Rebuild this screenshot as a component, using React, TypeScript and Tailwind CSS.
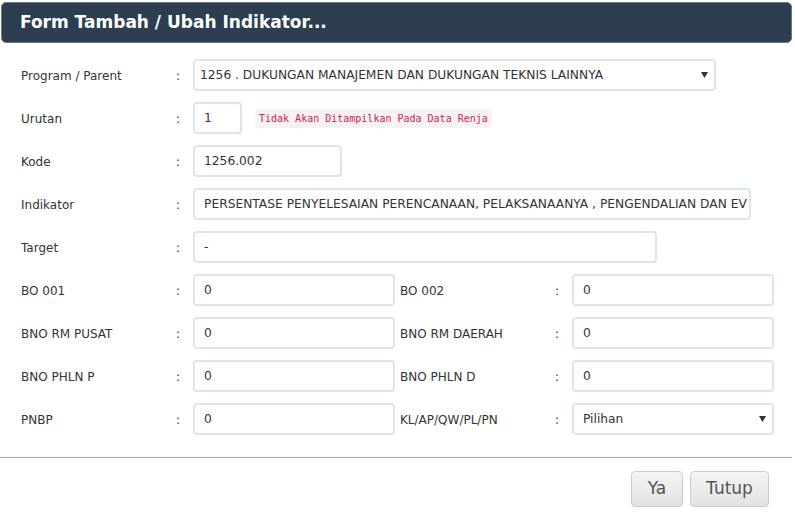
import React from "react";

const font = { fontFamily: '"DejaVu Sans", Verdana, sans-serif' };

function Arrow() {
  return (
    <svg width="7" height="6" viewBox="0 0 7 6" className="shrink-0">
      <path d="M0 0 H7 L3.5 6 Z" fill="#333" />
    </svg>
  );
}

function Input({ value, w }: { value: string; w: string }) {
  return (
    <div
      className={`h-[32px] ${w} shrink-0 border-2 border-[#dce4ec] rounded-[4px] bg-white flex items-center pl-[9px] pr-[6px] text-[12.25px] text-[#333] overflow-hidden whitespace-nowrap`}
    >
      {value}
    </div>
  );
}

function Select({ value, w }: { value: string; w: string }) {
  return (
    <div
      className={`h-[32px] ${w} shrink-0 border-2 border-[#dce4ec] rounded-[4px] bg-white flex items-center justify-between pl-[5px] pr-[6px] text-[12.25px] text-[#333] whitespace-nowrap`}
    >
      <span>{value}</span>
      <Arrow />
    </div>
  );
}

function Label({ text }: { text: string }) {
  return (
    <>
      <div className="w-[155px] shrink-0 text-[12px] text-[#333] pt-[1px]">{text}</div>
      <div className="w-[17px] shrink-0 text-[12px] text-[#333] pt-[1px]">:</div>
    </>
  );
}

function Row({ label, children }: { label: string; children: React.ReactNode }) {
  return (
    <div className="flex items-center">
      <Label text={label} />
      {children}
    </div>
  );
}

function Half({ label, children }: { label: string; children: React.ReactNode }) {
  return (
    <div className="flex items-center w-[374px]">
      <Label text={label} />
      <div className="flex-1">{children}</div>
    </div>
  );
}

export default function App() {
  return (
    <div className="w-[795px] h-[525px] bg-white overflow-hidden" style={font}>
      <div className="pt-[2px] px-[1px] pr-[3px]">
        <div className="h-[41px] bg-[#2c3e50] rounded-[5px] border border-[#6b7785] flex items-center pl-[18px]">
          <span className="text-white font-bold text-[17px]">Form Tambah / Ubah Indikator...</span>
        </div>
      </div>
      <div className="px-[21px] pt-[16px] flex flex-col gap-[11px]">
        <Row label="Program / Parent">
          <Select value="1256 . DUKUNGAN MANAJEMEN DAN DUKUNGAN TEKNIS LAINNYA" w="w-[523px]" />
        </Row>
        <Row label="Urutan">
          <Input value="1" w="w-[49px]" />
          <span
            className="ml-[13px] px-[4px] py-[2px] rounded-[4px] bg-[#f9f2f4] text-[#c7254e] text-[10px]"
            style={{ fontFamily: '"DejaVu Sans Mono", "Liberation Mono", monospace' }}
          >
            Tidak Akan Ditampilkan Pada Data Renja
          </span>
        </Row>
        <Row label="Kode">
          <Input value="1256.002" w="w-[149px]" />
        </Row>
        <Row label="Indikator">
          <Input
            value="PERSENTASE PENYELESAIAN PERENCANAAN, PELAKSANAANYA , PENGENDALIAN DAN EV"
            w="w-[558px]"
          />
        </Row>
        <Row label="Target">
          <Input value="-" w="w-[464px]" />
        </Row>
        <div className="flex gap-[5px]">
          <Half label="BO 001"><Input value="0" w="w-[202px]" /></Half>
          <Half label="BO 002"><Input value="0" w="w-[202px]" /></Half>
        </div>
        <div className="flex gap-[5px]">
          <Half label="BNO RM PUSAT"><Input value="0" w="w-[202px]" /></Half>
          <Half label="BNO RM DAERAH"><Input value="0" w="w-[202px]" /></Half>
        </div>
        <div className="flex gap-[5px]">
          <Half label="BNO PHLN P"><Input value="0" w="w-[202px]" /></Half>
          <Half label="BNO PHLN D"><Input value="0" w="w-[202px]" /></Half>
        </div>
        <div className="flex gap-[5px]">
          <Half label="PNBP"><Input value="0" w="w-[202px]" /></Half>
          <Half label="KL/AP/QW/PL/PN"><Select value="Pilihan" w="w-[202px] !pl-[9px]" /></Half>
        </div>
      </div>
      <div className="mt-[22px] w-[792px] h-px bg-[#aaaaaa]" />
      <div className="flex justify-end gap-[7px] pr-[26px] pt-[13px]">
        <button className="h-[36px] w-[52px] rounded-[4px] border border-[#cccccc] bg-gradient-to-b from-[#f4f4f4] to-[#e2e2e2] text-[17px] text-[#555]">
          Ya
        </button>
        <button className="h-[36px] w-[79px] rounded-[4px] border border-[#cccccc] bg-gradient-to-b from-[#f4f4f4] to-[#e2e2e2] text-[17px] text-[#555]">
          Tutup
        </button>
      </div>
    </div>
  );
}
